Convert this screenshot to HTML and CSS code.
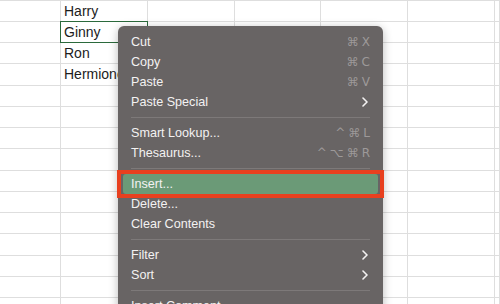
FILE: index.html
```html
<!DOCTYPE html>
<html lang="en">
<head>
  <meta charset="UTF-8"/>
  <meta name="viewport" content="width=device-width, initial-scale=1.0"/>
  <title>Insert menu</title>
  <link rel="stylesheet" href="styles.css">
</head>
<body>

<div class="sheet">
  <div class="cell"></div><div class="cell"></div><div class="cell"></div><div class="cell"></div><div class="cell"></div><div class="cell"></div><div class="cell"></div>
  <div class="cell"></div><div class="cell">Harry</div><div class="cell"></div><div class="cell"></div><div class="cell"></div><div class="cell"></div><div class="cell"></div>
  <div class="cell"></div><div class="cell active">Ginny</div><div class="cell"></div><div class="cell"></div><div class="cell"></div><div class="cell"></div><div class="cell"></div>
  <div class="cell"></div><div class="cell">Ron</div><div class="cell"></div><div class="cell"></div><div class="cell"></div><div class="cell"></div><div class="cell"></div>
  <div class="cell"></div><div class="cell">Hermione</div><div class="cell"></div><div class="cell"></div><div class="cell"></div><div class="cell"></div><div class="cell"></div>
  <div class="cell"></div><div class="cell"></div><div class="cell"></div><div class="cell"></div><div class="cell"></div><div class="cell"></div><div class="cell"></div>
  <div class="cell"></div><div class="cell"></div><div class="cell"></div><div class="cell"></div><div class="cell"></div><div class="cell"></div><div class="cell"></div>
  <div class="cell"></div><div class="cell"></div><div class="cell"></div><div class="cell"></div><div class="cell"></div><div class="cell"></div><div class="cell"></div>
  <div class="cell"></div><div class="cell"></div><div class="cell"></div><div class="cell"></div><div class="cell"></div><div class="cell"></div><div class="cell"></div>
  <div class="cell"></div><div class="cell"></div><div class="cell"></div><div class="cell"></div><div class="cell"></div><div class="cell"></div><div class="cell"></div>
  <div class="cell"></div><div class="cell"></div><div class="cell"></div><div class="cell"></div><div class="cell"></div><div class="cell"></div><div class="cell"></div>
  <div class="cell"></div><div class="cell"></div><div class="cell"></div><div class="cell"></div><div class="cell"></div><div class="cell"></div><div class="cell"></div>
  <div class="cell"></div><div class="cell"></div><div class="cell"></div><div class="cell"></div><div class="cell"></div><div class="cell"></div><div class="cell"></div>
  <div class="cell"></div><div class="cell"></div><div class="cell"></div><div class="cell"></div><div class="cell"></div><div class="cell"></div><div class="cell"></div>
  <div class="cell"></div><div class="cell"></div><div class="cell"></div><div class="cell"></div><div class="cell"></div><div class="cell"></div><div class="cell"></div>
  <div class="cell"></div><div class="cell"></div><div class="cell"></div><div class="cell"></div><div class="cell"></div><div class="cell"></div><div class="cell"></div>
</div>

<div class="menu">
  <div class="item"><span>Cut</span><span class="keys"><span>⌘</span><span>X</span></span></div>
  <div class="item"><span>Copy</span><span class="keys"><span>⌘</span><span>C</span></span></div>
  <div class="item"><span>Paste</span><span class="keys"><span>⌘</span><span>V</span></span></div>
  <div class="item"><span>Paste Special</span>
    <svg class="chevron" width="6" height="10" viewBox="0 0 6 10"><path d="M1 1l4 4-4 4" fill="none" stroke="#f4f2f2" stroke-width="1.6" stroke-linecap="round" stroke-linejoin="round"/></svg>
  </div>
  <div class="sep"></div>
  <div class="item"><span>Smart Lookup...</span><span class="keys"><span>^</span><span>⌘</span><span>L</span></span></div>
  <div class="item"><span>Thesaurus...</span><span class="keys"><span>^</span><span>⌥</span><span>⌘</span><span>R</span></span></div>
  <div class="sep"></div>
  <div class="item hover marked"><span>Insert...</span></div>
  <div class="item"><span>Delete...</span></div>
  <div class="item"><span>Clear Contents</span></div>
  <div class="sep"></div>
  <div class="item"><span>Filter</span>
    <svg class="chevron" width="6" height="10" viewBox="0 0 6 10"><path d="M1 1l4 4-4 4" fill="none" stroke="#f4f2f2" stroke-width="1.6" stroke-linecap="round" stroke-linejoin="round"/></svg>
  </div>
  <div class="item"><span>Sort</span>
    <svg class="chevron" width="6" height="10" viewBox="0 0 6 10"><path d="M1 1l4 4-4 4" fill="none" stroke="#f4f2f2" stroke-width="1.6" stroke-linecap="round" stroke-linejoin="round"/></svg>
  </div>
  <div class="sep"></div>
  <div class="item"><span>Insert Comment</span></div>
</div>

</body>
</html>
```

FILE: styles.css
```css
html, body {
  overflow: hidden;
}
body {
  margin: 0;
  height: 304px;
  background: #fff;
  font-family: "Liberation Sans", Arial, sans-serif;
  color: #1c1c1c;
}
.sheet {
  display: grid;
  grid-template-columns: 61px repeat(5, 86.8px) 1fr;
  grid-auto-rows: 21.25px;
  margin-top: -20.6px;
}
.cell {
  box-sizing: border-box;
  border-right: 1px solid #dedede;
  border-bottom: 1px solid #dedede;
  font-size: 14px;
  line-height: 21px;
  padding-left: 3px;
  white-space: nowrap;
}
.active {
  position: relative;
}
.active::after {
  content: "";
  position: absolute;
  top: -1px;
  left: -1px;
  right: -1px;
  bottom: -1px;
  border: 1px solid #2b6a3c;
}
.menu {
  position: absolute;
  left: 118px;
  top: 26px;
  width: 265px;
  height: 300px;
  padding-top: 6px;
  box-sizing: border-box;
  background: #686464;
  border-radius: 6px;
  box-shadow: 0 2px 10px rgba(0, 0, 0, 0.28);
  color: #f4f2f2;
  font-size: 12.6px;
}
.item {
  display: flex;
  justify-content: space-between;
  align-items: center;
  height: 20px;
  margin: 0 5px;
  padding: 0 8px;
  border-radius: 3px;
}
.keys {
  display: flex;
  gap: 3px;
  color: #9d9999;
  font-family: "DejaVu Sans", sans-serif;
  font-size: 12px;
}
.chevron {
  margin-right: 2px;
}
.sep {
  height: 1px;
  margin: 5px 13px;
  background: #7d7979;
}
.hover {
  background: #6b9a77;
}
.marked {
  position: relative;
}
.marked::after {
  content: "";
  position: absolute;
  top: -4px;
  bottom: -4px;
  left: -6px;
  right: -6px;
  border: 4px solid #e8401f;
}
```
